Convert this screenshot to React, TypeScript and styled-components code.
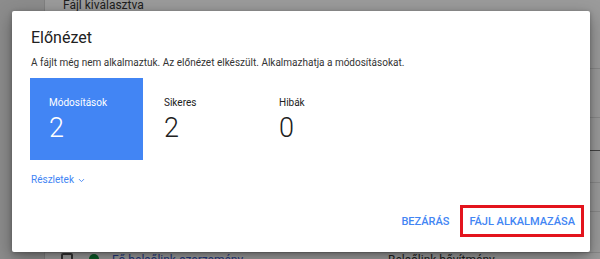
import React from "react";
import styled, { createGlobalStyle } from "styled-components";
import { ChevronDown } from "lucide-react";

const Global = createGlobalStyle`
  html, body { margin: 0; padding: 0; }
  body { font-family: Roboto, "Noto Sans", Arial, sans-serif; background: #fff; }
  * { box-sizing: border-box; }
`;

const Screen = styled.div`
  position: relative;
  width: 600px;
  height: 259px;
  overflow: hidden;
  display: flex;
  background: #fff;
`;

const Sidebar = styled.aside`
  width: 45px;
  flex: none;
  background: #e2e2e2;
  border-right: 1px solid #cfcfcf;
`;

const Main = styled.main`
  flex: 1;
  display: flex;
  flex-direction: column;
  background: #fafafa;
`;

const PageHeader = styled.div`
  height: 69px;
  flex: none;
  padding-left: 18px;
  border-bottom: 1px solid #dedede;
  font-size: 12px;
  line-height: 12px;
  color: #333;
`;

const HeaderText = styled.div`
  margin-top: -1px;
`;

const TableRow = styled.div<{ $h: number; $dark?: boolean }>`
  height: ${(p) => p.$h}px;
  flex: none;
  border-bottom: 1px solid ${(p) => (p.$dark ? "#6f6f6f" : "#dedede")};
  display: flex;
  align-items: flex-start;
  padding-left: 16px;
  font-size: 12px;
  color: #333;
`;

const Checkbox = styled.span`
  width: 12px;
  height: 12px;
  border: 2px solid #555;
  border-radius: 2px;
  flex: none;
`;

const Dot = styled.span`
  width: 10px;
  height: 10px;
  margin-top: 1px;
  border-radius: 50%;
  background: #11913f;
  margin-left: 16px;
  flex: none;
`;

const LinkText = styled.span`
  margin-left: 13px;
  width: 276px;
  color: #3b5bcc;
  font-size: 12px;
  line-height: 14px;
`;

const CellText = styled.span`
  font-size: 12px;
  line-height: 14px;
  color: #333;
`;

const Overlay = styled.div`
  position: absolute;
  inset: 0;
  background: rgba(0, 0, 0, 0.38);
`;

const Dialog = styled.section`
  position: absolute;
  left: 12px;
  top: 11px;
  width: 578px;
  height: 241px;
  background: #fff;
  border-radius: 2px;
  box-shadow: 0 6px 18px rgba(0, 0, 0, 0.35), 0 1px 4px rgba(0, 0, 0, 0.25);
  padding: 16px 6px 15px 18px;
  display: flex;
  flex-direction: column;
`;

const Title = styled.h2`
  margin: 0;
  font-size: 16px;
  line-height: 22px;
  font-weight: 400;
  color: #212121;
  padding-left: 1px;
`;

const Message = styled.p`
  margin: 6px 0 0;
  font-size: 10px;
  line-height: 16px;
  color: #333;
  padding-left: 1px;
`;

const Stats = styled.div`
  margin-top: 7px;
  display: flex;
  gap: 2px;
`;

const Stat = styled.div<{ $active?: boolean }>`
  width: 113px;
  height: 82px;
  padding: 18px 0 0 19px;
  background: ${(p) => (p.$active ? "#4285f4" : "transparent")};
  color: ${(p) => (p.$active ? "#fff" : "#212121")};
`;

const StatLabel = styled.div`
  font-size: 10px;
  line-height: 14px;
`;

const StatValue = styled.div`
  margin-top: 3px;
  font-size: 27px;
  line-height: 30px;
  font-weight: 300;
`;

const Details = styled.button`
  margin-top: 13px;
  align-self: flex-start;
  display: flex;
  align-items: center;
  gap: 3px;
  border: 0;
  background: none;
  padding: 0 0 0 1px;
  font-family: inherit;
  font-size: 10px;
  line-height: 14px;
  color: #4285f4;
  cursor: pointer;
`;

const Footer = styled.div`
  margin-top: auto;
  display: flex;
  justify-content: flex-end;
  align-items: center;
  gap: 3px;
`;

const TextButton = styled.button<{ $highlight?: boolean }>`
  height: 32px;
  padding: 0 ${(p) => (p.$highlight ? "6px" : "8px")};
  border: ${(p) => (p.$highlight ? "3px solid #e3141d" : "0")};
  background: #fff;
  font-family: inherit;
  font-size: 11px;
  font-weight: 500;
  color: #4285f4;
  cursor: pointer;
  line-height: 1;
`;

export default function App() {
  return (
    <>
      <Global />
      <Screen>
        <Sidebar />
        <Main>
          <PageHeader>
            <HeaderText>Fájl kiválasztva</HeaderText>
          </PageHeader>
          <TableRow $h={49} />
          <TableRow $h={33} $dark />
          <TableRow $h={32} />
          <TableRow $h={29} />
          <TableRow $h={41} />
          <TableRow $h={20}>
            <Checkbox />
            <Dot />
            <LinkText>Fő belsőlink-szerzemény</LinkText>
            <CellText>Belsőlink bővítmény</CellText>
          </TableRow>
        </Main>
        <Overlay />
        <Dialog role="dialog" aria-labelledby="preview-title">
          <Title id="preview-title">Előnézet</Title>
          <Message>
            A fájlt még nem alkalmaztuk. Az előnézet elkészült. Alkalmazhatja a módosításokat.
          </Message>
          <Stats>
            <Stat $active>
              <StatLabel>Módosítások</StatLabel>
              <StatValue>2</StatValue>
            </Stat>
            <Stat>
              <StatLabel>Sikeres</StatLabel>
              <StatValue>2</StatValue>
            </Stat>
            <Stat>
              <StatLabel>Hibák</StatLabel>
              <StatValue>0</StatValue>
            </Stat>
          </Stats>
          <Details>
            Részletek <ChevronDown size={9} strokeWidth={2.4} />
          </Details>
          <Footer>
            <TextButton>BEZÁRÁS</TextButton>
            <TextButton $highlight>FÁJL ALKALMAZÁSA</TextButton>
          </Footer>
        </Dialog>
      </Screen>
    </>
  );
}
